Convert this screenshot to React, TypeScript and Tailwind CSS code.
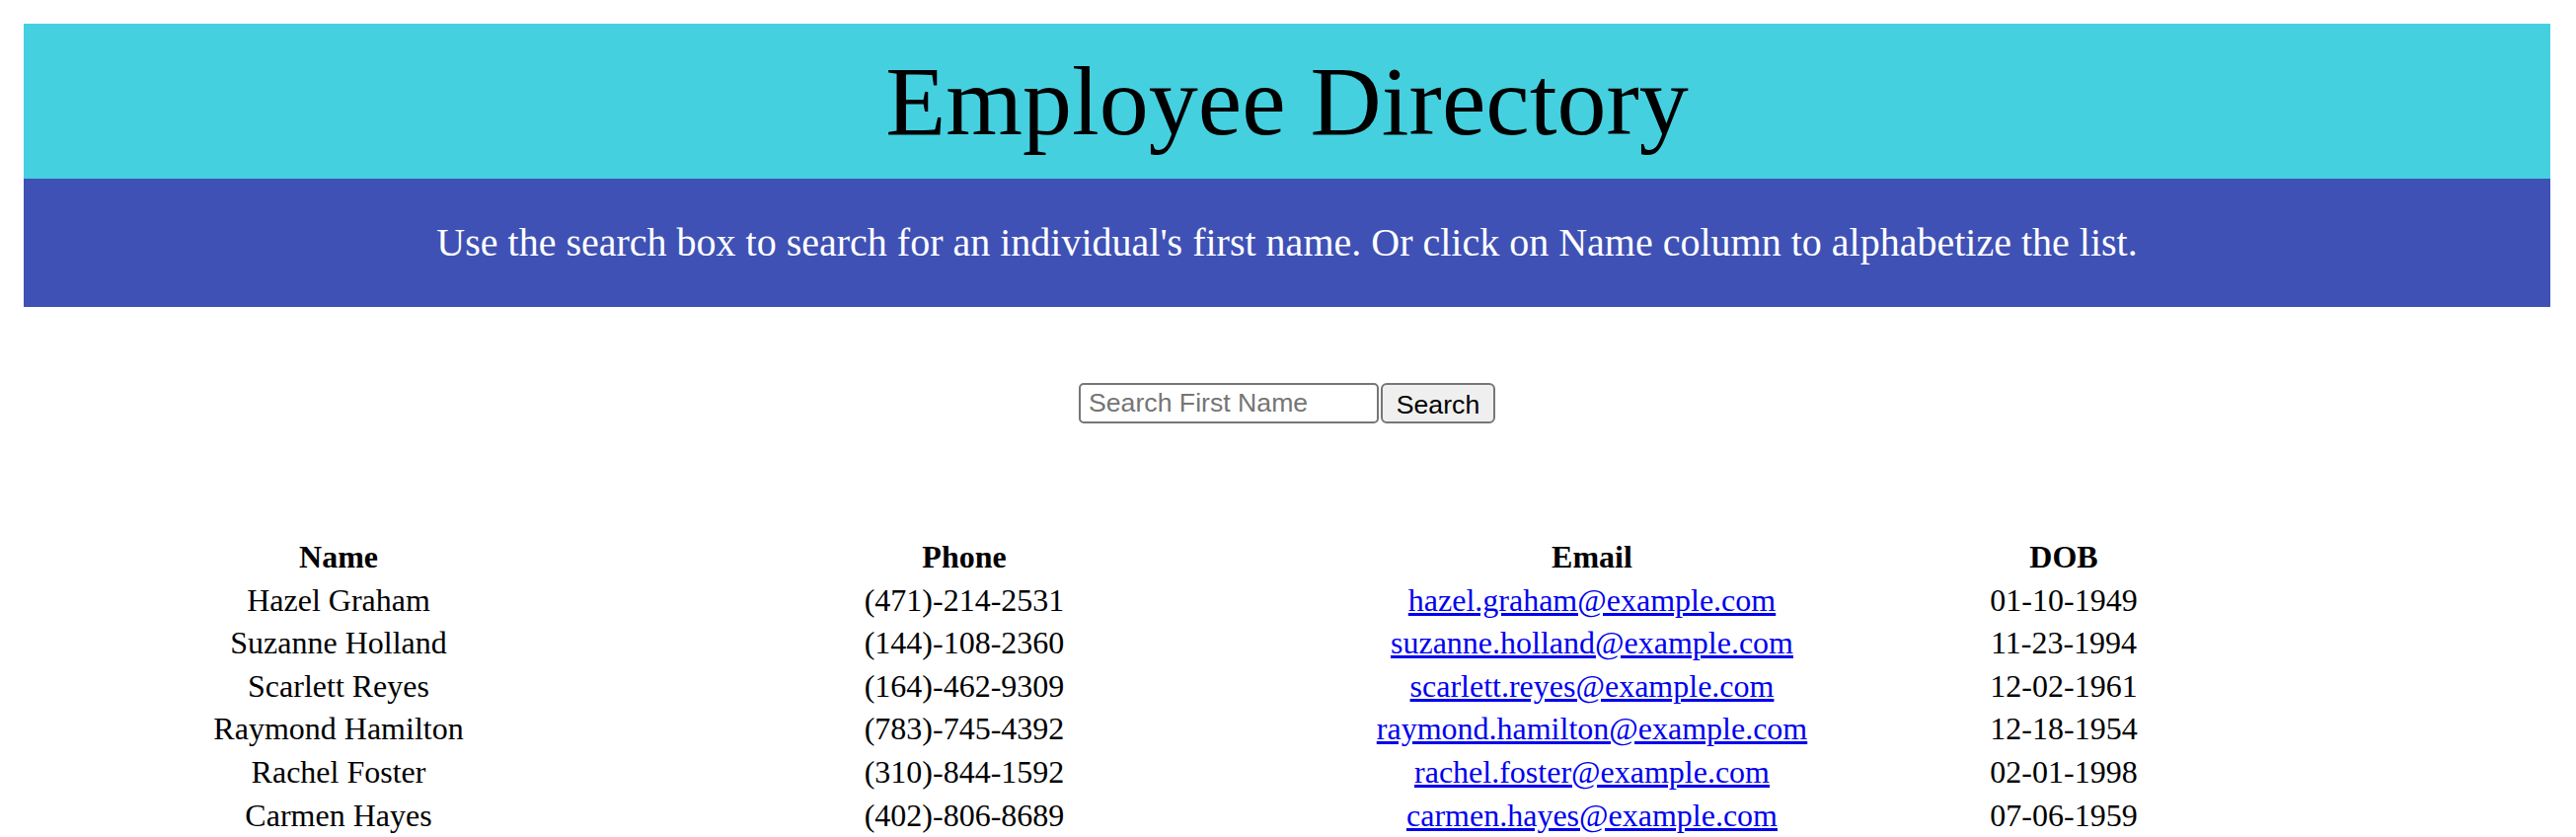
import React, { useState } from 'react';

interface Employee {
  name: string;
  phone: string;
  email: string;
  dob: string;
}

const employees: Employee[] = [
  { name: 'Hazel Graham', phone: '(471)-214-2531', email: 'hazel.graham@example.com', dob: '01-10-1949' },
  { name: 'Suzanne Holland', phone: '(144)-108-2360', email: 'suzanne.holland@example.com', dob: '11-23-1994' },
  { name: 'Scarlett Reyes', phone: '(164)-462-9309', email: 'scarlett.reyes@example.com', dob: '12-02-1961' },
  { name: 'Raymond Hamilton', phone: '(783)-745-4392', email: 'raymond.hamilton@example.com', dob: '12-18-1954' },
  { name: 'Rachel Foster', phone: '(310)-844-1592', email: 'rachel.foster@example.com', dob: '02-01-1998' },
  { name: 'Carmen Hayes', phone: '(402)-806-8689', email: 'carmen.hayes@example.com', dob: '07-06-1959' },
];

const App: React.FC = () => {
  const [query, setQuery] = useState('');

  return (
    <div className="pl-[24px] pr-[26px] pt-[24px] font-['Liberation_Serif','Times_New_Roman',serif] text-black bg-white">
      <header className="h-[157px] bg-[#45d0e0] flex items-center justify-center">
        <h1 className="text-[100px] leading-none font-normal">Employee Directory</h1>
      </header>
      <div className="h-[130px] bg-[#3f51b5] flex items-center justify-center">
        <p className="text-[40px] leading-none text-white">
          Use the search box to search for an individual's first name. Or click on Name column to alphabetize the list.
        </p>
      </div>

      <form className="mt-[77px] flex justify-center gap-[2px]" onSubmit={(e) => e.preventDefault()}>
        <input
          type="text"
          value={query}
          onChange={(e) => setQuery(e.target.value)}
          placeholder="Search First Name"
          className="w-[304px] h-[41px] px-[8px] border-2 border-[#767676] rounded-[5px] bg-white font-['Liberation_Sans',Arial,sans-serif] text-[26.67px] placeholder:text-[#757575] outline-none"
        />
        <button
          type="submit"
          className="w-[116px] h-[41px] border-2 border-[#767676] rounded-[6px] bg-[#efefef] font-['Liberation_Sans',Arial,sans-serif] text-[26.67px] text-black"
        >
          Search
        </button>
      </form>

      <table className="mt-[114px] border-collapse text-[32px] leading-[43.6px]">
        <thead>
          <tr>
            <th className="w-[638px] p-0 font-bold text-center cursor-pointer">Name</th>
            <th className="w-[630px] p-0 font-bold text-center">Phone</th>
            <th className="w-[642px] p-0 font-bold text-center">Email</th>
            <th className="w-[314px] p-0 font-bold text-center">DOB</th>
          </tr>
        </thead>
        <tbody>
          {employees.map((emp) => (
            <tr key={emp.email}>
              <td className="p-0 text-center">{emp.name}</td>
              <td className="p-0 text-center">{emp.phone}</td>
              <td className="p-0 text-center">
                <a href={`mailto:${emp.email}`} className="text-[#0000ee] underline">
                  {emp.email}
                </a>
              </td>
              <td className="p-0 text-center">{emp.dob}</td>
            </tr>
          ))}
        </tbody>
      </table>
    </div>
  );
};

export default App;
